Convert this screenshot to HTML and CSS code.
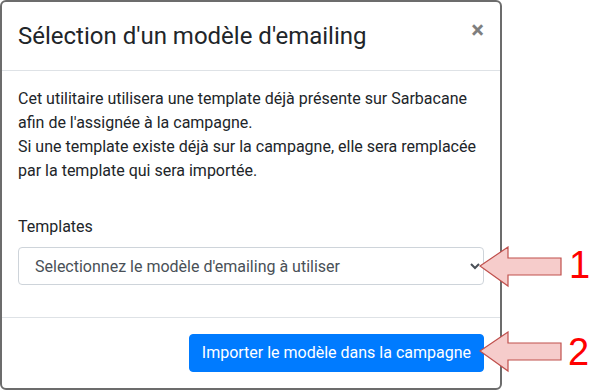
FILE: index.html
```html
<!DOCTYPE html>
<html lang="fr">
<head>
    <meta charset="UTF-8">
    <title>Sélection d'un modèle d'emailing</title>
    <link rel="stylesheet" href="styles.css">
</head>
<body>
    <div class="page">
        <div class="modal">
            <div class="modal-header">
                <h4 class="modal-title">Sélection d'un modèle d'emailing</h4>
                <button type="button" class="close">&times;</button>
            </div>
            <div class="modal-body">
                <p class="intro">
                    Cet utilitaire utilisera une template déjà présente sur Sarbacane<br>
                    afin de l'assignée à la campagne.<br>
                    Si une template existe déjà sur la campagne, elle sera remplacée<br>
                    par la template qui sera importée.
                </p>
                <div class="form-group">
                    <label for="template">Templates</label>
                    <select id="template" class="form-control">
                        <option>Selectionnez le modèle d'emailing à utiliser</option>
                    </select>
                </div>
            </div>
            <div class="modal-footer">
                <button type="button" class="btn-primary">Importer le modèle dans la campagne</button>
            </div>
        </div>

        <!-- callouts -->
        <svg class="callout callout-1" width="84" height="42" viewBox="0 0 84 42">
            <polygon points="1,20 29,1 29,12 82,12 82,29 29,29 29,40" fill="#f6cccb" stroke="#c0504d" stroke-width="1.2"/>
        </svg>
        <span class="callout-num num-1">1</span>
        <svg class="callout callout-2" width="84" height="42" viewBox="0 0 84 42">
            <polygon points="1,20 29,1 29,12 82,12 82,29 29,29 29,40" fill="#f6cccb" stroke="#c0504d" stroke-width="1.2"/>
        </svg>
        <span class="callout-num num-2">2</span>
    </div>
</body>
</html>
```

FILE: styles.css
```css
body {
    margin: 0;
    padding: 0;
    background: #fff;
    font-family: Roboto, "Liberation Sans", sans-serif;
    color: #212529;
    font-size: 16px;
    line-height: 1.5;
}
.page {
    position: relative;
    width: 601px;
    height: 391px;
}
.modal {
    width: 502px;
    box-sizing: border-box;
    border: 2px solid #6c6c6c;
    border-radius: 6px;
    background: #fff;
}
.modal-header {
    display: flex;
    align-items: flex-start;
    padding: 16px;
    border-bottom: 1px solid #dee2e6;
}
.modal-title {
    margin: 0;
    font-size: 24px;
    font-weight: 400;
    line-height: 1.5;
}
.close {
    margin: -16px -16px -16px auto;
    padding: 16px;
    background: transparent;
    border: 0;
    font-family: Roboto, "Liberation Sans", sans-serif;
    font-size: 24px;
    font-weight: 700;
    line-height: 1;
    color: #000;
    opacity: .5;
    text-shadow: 0 1px 0 #fff;
}
.modal-body {
    padding: 16px;
}
.intro {
    margin: 0 0 32px;
}
.form-group {
    margin-bottom: 16px;
}
label {
    display: inline-block;
    margin-bottom: 8px;
}
.form-control {
    display: block;
    width: 100%;
    height: 38px;
    padding: 6px 12px;
    font-family: Roboto, "Liberation Sans", sans-serif;
    font-size: 16px;
    color: #495057;
    background: #fff;
    border: 1px solid #ced4da;
    border-radius: 4px;
    box-sizing: border-box;
}
.modal-footer {
    display: flex;
    justify-content: flex-end;
    padding: 12px;
    border-top: 1px solid #dee2e6;
}
.btn-primary {
    margin: 4px;
    padding: 6px 12px;
    font-family: Roboto, "Liberation Sans", sans-serif;
    font-size: 16px;
    line-height: 1.5;
    color: #fff;
    background-color: #007bff;
    border: 1px solid #007bff;
    border-radius: 4px;
}
.callout {
    position: absolute;
}
.callout-1 {
    left: 479px;
    top: 246px;
}
.callout-2 {
    left: 479px;
    top: 331px;
}
.callout-num {
    position: absolute;
    font-family: "Liberation Sans", Arial, sans-serif;
    font-size: 38px;
    line-height: 1;
    color: #ff0000;
}
.num-1 {
    left: 569px;
    top: 246px;
}
.num-2 {
    left: 568px;
    top: 333px;
}
```
